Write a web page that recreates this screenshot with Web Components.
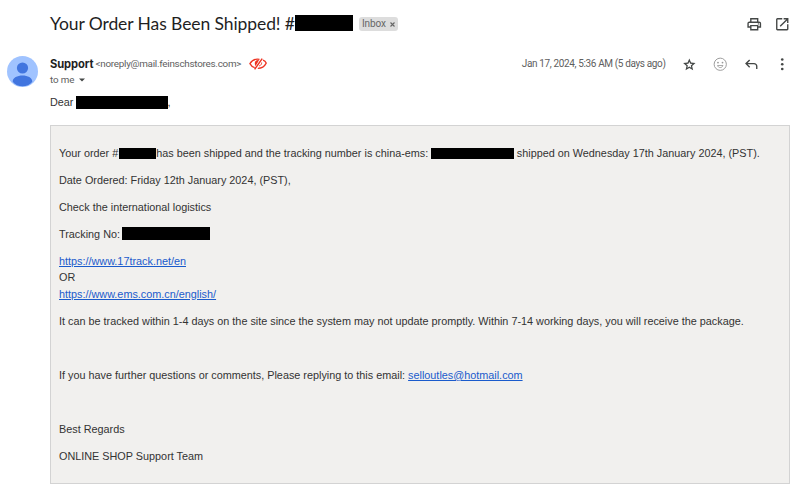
<!DOCTYPE html>
<html lang="en">
<head>
<meta charset="utf-8">
<title>Your Order Has Been Shipped!</title>
<style>
    body {
        margin: 0;
        background: #fff;
    }
</style>
</head>
<body>
<mail-view></mail-view>
<script>
const icons = {
    print: '<path d="M16 8V5H8v3H6V3h12v5h-2zM4 10h16zM18 12.5q.425 0 .713-.288T19 11.5t-.288-.712T18 10.500t-.712.288T17 11.500t.288.712.712.288zM16 19v-4H8v4h8zm2 2H6v-4H2v-6q0-1.275.875-2.138T5 8h14q1.275 0 2.138.863T22 11v6h-4v4zm2-6v-4q0-.425-.288-.712T19 10H5q-.425 0-.713.288T4 11v4h2v-2h12v2h2z"/>',
    open: '<path d="M5 21q-.825 0-1.413-.588T3 19V5q0-.825.588-1.413T5 3h7v2H5v14h14v-7h2v7q0 .825-.588 1.413T19 21H5zm4.700-5.300-1.400-1.400L17.600 5H14V3h7v7h-2V6.400l-9.300 9.300z"/>',
    star: '<path transform="translate(1.300 1.800) scale(.9)" d="m8.850 16.825 3.150-1.900 3.150 1.925-.825-3.600 2.775-2.400-3.650-.325-1.450-3.400-1.450 3.375-3.650.325 2.775 2.425-.825 3.575zM5.825 21l1.625-7.025L2 9.250l7.200-.625L12 2l2.800 6.625 7.200.625-5.450 4.725L18.175 21 12 17.275 5.825 21z"/>',
    smile: '<circle cx="12" cy="12" r="8.900" fill="none" stroke="currentColor" stroke-width="1.400"/><circle cx="8.700" cy="9.600" r="1.300"/><circle cx="15.300" cy="9.600" r="1.300"/><path d="M8 13.800h8c-.6 1.900-2.100 3-4 3s-3.400-1.100-4-3z" fill="none" stroke="currentColor" stroke-width="1.200"/>',
    reply: '<path d="M19 19v-4q0-1.250-.875-2.125T16 12H6.825l3.600 3.600L9 17l-6-6 6-6 1.425 1.400-3.600 3.600H16q2.075 0 3.538 1.463T21 15v4h-2z"/>',
    more: '<circle cx="12" cy="5" r="1.900"/><circle cx="12" cy="12" r="1.900"/><circle cx="12" cy="19" r="1.900"/>'
}

class MailIcon extends HTMLElement {
    constructor() {
        super()
        this.attachShadow({ mode: "open" })
    }

    connectedCallback() {
        this.shadowRoot.innerHTML = `
            <style>
                :host { display: block; width: 16.500px; height: 16.500px; color: #444746; }
                svg { display: block; width: 100%; height: 100%; fill: currentColor; }
            </style>
            <svg viewBox="0 0 24 24">${icons[this.getAttribute('name')]}</svg>
        `
    }
}

class RedactedText extends HTMLElement {
    constructor() {
        super()
        this.attachShadow({ mode: "open" })
        this.shadowRoot.innerHTML = `
            <style>
                :host {
                    display: inline-block;
                    width: var(--w);
                    height: var(--h, 12px);
                    margin: 0 var(--after, 0px) 0 var(--before, 0px);
                    vertical-align: var(--drop, -3px);
                    background: #000;
                }
            </style>
        `
    }
}

class UserAvatar extends HTMLElement {
    constructor() {
        super()
        this.attachShadow({ mode: "open" })
        this.shadowRoot.innerHTML = `
            <style>
                :host { display: block; width: 31px; height: 31px; border-radius: 50%; overflow: hidden; }
                svg { display: block; }
            </style>
            <svg width="31" height="31" viewBox="0 0 31 31">
                <rect width="31" height="31" fill="#a0c3ff"/>
                <circle cx="15.500" cy="12" r="5.600" fill="#4175df"/>
                <path d="M5.700 25.700c0-4 4.600-6.200 9.800-6.200s9.800 2.200 9.800 6.200c-2.300 3-6 4.500-9.800 4.500s-7.500-1.500-9.800-4.500z" fill="#4175df"/>
            </svg>
        `
    }
}

class LabelChip extends HTMLElement {
    constructor() {
        super()
        this.attachShadow({ mode: "open" })
        this.shadowRoot.innerHTML = `
            <style>
                :host {
                    display: flex;
                    align-items: center;
                    box-sizing: border-box;
                    width: 39px;
                    height: 14px;
                    padding-left: 3px;
                    border-radius: 3px;
                    background: #ddd;
                    color: #666;
                    font: 10px/14px Roboto, sans-serif;
                    letter-spacing: -.1px;
                }
                svg { margin: 1px 0 0 4.500px; }
            </style>
            <slot></slot>
            <svg width="5" height="5" viewBox="0 0 5 5"><path d="M.5.5l4 4M4.500.5l-4 4" stroke="#666" stroke-width="1.100"/></svg>
        `
    }
}

class MailSubject extends HTMLElement {
    constructor() {
        super()
        this.attachShadow({ mode: "open" })
        this.shadowRoot.innerHTML = `
            <style>
                :host { display: flex; align-items: center; height: 48px; padding: 0 10px 0 50px; }
                h2 {
                    margin: 0;
                    font: 400 17.500px/24px Lato, sans-serif;
                    letter-spacing: -.09px;
                    color: #1f1f1f;
                    white-space: nowrap;
                    width: 245px;
                }
                redacted-text { --w: 58px; --h: 16px; flex: none; margin-top: -2px; }
                label-chip { margin-left: 6px; }
                .tools { display: flex; gap: 11.500px; margin-left: auto; }
            </style>
            <h2><slot></slot></h2>
            <redacted-text></redacted-text>
            <label-chip>Inbox</label-chip>
            <div class="tools">
                <mail-icon name="print"></mail-icon>
                <mail-icon name="open"></mail-icon>
            </div>
        `
    }
}

class MailSender extends HTMLElement {
    constructor() {
        super()
        this.attachShadow({ mode: "open" })
        this.shadowRoot.innerHTML = `
            <style>
                :host {
                    display: grid;
                    grid-template-columns: 43px 1fr auto;
                    box-sizing: border-box;
                    padding: 8px 10px 0 7px;
                    height: 41px;
                    font: 10px/16px Roboto, sans-serif;
                    color: #5e5e5e;
                }
                .line { display: flex; align-items: center; height: 16px; white-space: nowrap; }
                .name { width: 45.500px; font: 700 11.200px/16px Inter, sans-serif; letter-spacing: -.1px; color: #1f1f1f; }
                .email { width: 153.500px; font-size: 9.900px; letter-spacing: -.27px; }
                .to { font-size: 9.800px; letter-spacing: -.1px; }
                .to svg { margin-left: 5px; }
                .date { font-size: 10px; letter-spacing: -.37px; margin-right: 15px; }
                .tools { display: flex; gap: 14.500px; }
                .soft { color: #999; }
            </style>
            <user-avatar></user-avatar>
            <div>
                <div class="line">
                    <span class="name"><slot name="name"></slot></span>
                    <span class="email"><slot name="email"></slot></span>
                    <svg width="18" height="12" viewBox="0 0 18 12" fill="none" stroke="#ee3322">
                        <path d="M10.500 1.400C6.500.6 2.800 2.700.9 5.600c1 1.900 2.800 3.400 4.800 4" stroke-width="1.300"/>
                        <path d="M14 2.200c1.500.6 2.700 1.700 3.200 2.900-1.500 3-4.800 5.200-8.400 5.200" stroke-width="1.300"/>
                        <path d="M13.200.6 5.600 11.400" stroke-width="1.500"/>
                        <path d="M10 2.200c-2.400-.6-4.300 1-4.200 3.200 0 1 .3 1.900.8 2.600z" fill="#ee3322" stroke="none"/>
                        <path d="M12.700 4.500c0 1.700-1 3-2.500 3.500" stroke-width="1"/>
                    </svg>
                </div>
                <div class="line to"><slot name="to"></slot><svg width="6" height="4" viewBox="0 0 6 4"><path d="M0 .5h6L3 3.500z" fill="#444746"/></svg></div>
            </div>
            <div class="line">
                <span class="date"><slot name="date"></slot></span>
                <div class="tools">
                    <mail-icon name="star"></mail-icon>
                    <mail-icon name="smile" class="soft"></mail-icon>
                    <mail-icon name="reply"></mail-icon>
                    <mail-icon name="more"></mail-icon>
                </div>
            </div>
        `
    }
}

class MailBody extends HTMLElement {
    constructor() {
        super()
        this.attachShadow({ mode: "open" })
        this.shadowRoot.innerHTML = `
            <style>
                :host {
                    display: block;
                    margin-left: 50px;
                    width: 740px;
                    font: 10.830px/16.250px "Liberation Sans", Arial, sans-serif;
                    color: #333;
                    white-space: nowrap;
                }
                .greeting { height: 36px; padding-top: 5px; box-sizing: border-box; }
                .panel {
                    box-sizing: border-box;
                    height: 359px;
                    padding: 8px 8px 0;
                    border: 1px solid #d3d3d3;
                    background: #f1f0ee;
                }
                p { margin: 10.830px 0; height: 16.250px; }
                p.links { height: 48.750px; }
                a { color: #1a5bcc; }
            </style>
            <div class="greeting">Dear <redacted-text style="--w: 92px; --h: 13px; --after: -1px"></redacted-text>,</div>
            <div class="panel">
                <p>Your order #<redacted-text style="--w: 37px; --h: 11px; --drop: -2px; --before: 1px"></redacted-text>has been shipped and the tracking number is china-ems: <redacted-text style="--w: 83px; --h: 11px; --drop: -2px; --after: -.5px"></redacted-text> shipped on Wednesday 17th January 2024, (PST).</p>
                <p>Date Ordered: Friday 12th January 2024, (PST),</p>
                <p>Check the international logistics</p>
                <p>Tracking No: <redacted-text style="--w: 88px; --h: 13px; --drop: -2px; --before: -1px"></redacted-text></p>
                <p class="links"><a href="#">https://www.17track.net/en</a><br>OR<br><a href="#">https://www.ems.com.cn/english/</a></p>
                <p>It can be tracked within 1-4 days on the site since the system may not update promptly. Within 7-14 working days, you will receive the package.</p>
                <p></p>
                <p>If you have further questions or comments, Please replying to this email: <a href="#">selloutles@hotmail.com</a></p>
                <p></p>
                <p>Best Regards</p>
                <p>ONLINE SHOP Support Team</p>
            </div>
        `
    }
}

class MailView extends HTMLElement {
    constructor() {
        super()
        this.attachShadow({ mode: "open" })
        this.shadowRoot.innerHTML = `
            <style>
                :host { display: block; width: 800px; height: 504px; overflow: hidden; background: #fff; }
            </style>
            <mail-subject>Your Order Has Been Shipped! #</mail-subject>
            <mail-sender>
                <span slot="name">Support</span>
                <span slot="email">&lt;noreply@mail.feinschstores.com&gt;</span>
                <span slot="to">to me</span>
                <span slot="date">Jan 17, 2024, 5:36 AM (5 days ago)</span>
            </mail-sender>
            <mail-body></mail-body>
        `
    }
}

customElements.define('mail-icon', MailIcon)
customElements.define('redacted-text', RedactedText)
customElements.define('user-avatar', UserAvatar)
customElements.define('label-chip', LabelChip)
customElements.define('mail-subject', MailSubject)
customElements.define('mail-sender', MailSender)
customElements.define('mail-body', MailBody)
customElements.define('mail-view', MailView)
</script>
</body>
</html>
